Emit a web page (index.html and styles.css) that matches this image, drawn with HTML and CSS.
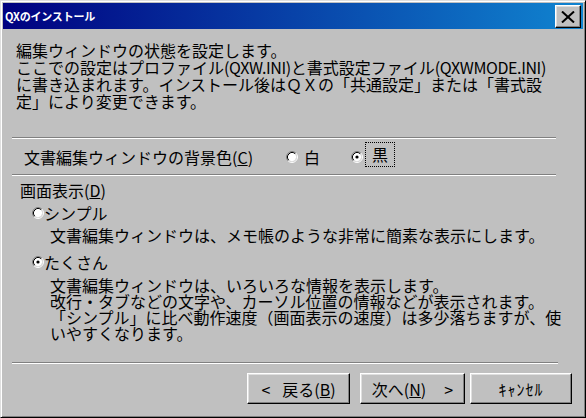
FILE: index.html
```html
<!DOCTYPE html>
<html lang="ja">
<head>
<meta charset="utf-8">
<title>QXのインストール</title>
<link rel="stylesheet" href="styles.css">
</head>
<body>
<div class="window">
  <div class="titlebar">
    <span class="title">QXのインストール</span>
    <button class="close" type="button" aria-label="閉じる">
      <svg width="14" height="12" viewBox="0 0 14 12"><path d="M1 0.5 L13 11.5 M13 0.5 L1 11.5" stroke="#000" stroke-width="2" fill="none"/></svg>
    </button>
  </div>
  <div class="content">
    <p class="intro">編集ウィンドウの状態を設定します。<br>ここでの設定はプロファイル<span class="latin">(QXW.INI)</span>と書式設定ファイル<span class="latin">(QXWMODE.INI)</span><br>に書き込まれます。インストール後はＱＸの「共通設定」または「書式設<br>定」により変更できます。</p>
    <hr class="sep">
    <div class="bg-row">
      <span class="bg-label">文書編集ウィンドウの背景色(<u>C</u>)</span>
      <span class="radio-item first">
        <svg class="radio" width="12" height="12" viewBox="0 0 12 12"><circle cx="6" cy="6" r="4.2" fill="#fff"/><path d="M2.11 9.89 A5.5 5.5 0 0 1 9.89 2.11" stroke="#808080" fill="none"/><path d="M9.89 2.11 A5.5 5.5 0 0 1 2.11 9.89" stroke="#fff" fill="none"/><path d="M2.82 9.18 A4.5 4.5 0 0 1 9.18 2.82" stroke="#000" fill="none"/><path d="M9.18 2.82 A4.5 4.5 0 0 1 2.82 9.18" stroke="#dfdfdf" fill="none"/></svg>
        <span>白</span>
      </span>
      <span class="radio-item second">
        <svg class="radio" width="12" height="12" viewBox="0 0 12 12"><circle cx="6" cy="6" r="4.2" fill="#fff"/><path d="M2.11 9.89 A5.5 5.5 0 0 1 9.89 2.11" stroke="#808080" fill="none"/><path d="M9.89 2.11 A5.5 5.5 0 0 1 2.11 9.89" stroke="#fff" fill="none"/><path d="M2.82 9.18 A4.5 4.5 0 0 1 9.18 2.82" stroke="#000" fill="none"/><path d="M9.18 2.82 A4.5 4.5 0 0 1 2.82 9.18" stroke="#dfdfdf" fill="none"/><circle cx="6" cy="6" r="1.6" fill="#000"/></svg>
        <span class="focus">黒</span>
      </span>
    </div>
    <hr class="sep flush">
    <div class="group-label">画面表示(<u>D</u>)</div>
    <div class="option opt-simple">
      <svg class="radio" width="12" height="12" viewBox="0 0 12 12"><circle cx="6" cy="6" r="4.2" fill="#fff"/><path d="M2.11 9.89 A5.5 5.5 0 0 1 9.89 2.11" stroke="#808080" fill="none"/><path d="M9.89 2.11 A5.5 5.5 0 0 1 2.11 9.89" stroke="#fff" fill="none"/><path d="M2.82 9.18 A4.5 4.5 0 0 1 9.18 2.82" stroke="#000" fill="none"/><path d="M9.18 2.82 A4.5 4.5 0 0 1 2.82 9.18" stroke="#dfdfdf" fill="none"/></svg>
      <span>シンプル</span>
    </div>
    <p class="desc desc-simple">文書編集ウィンドウは、メモ帳のような非常に簡素な表示にします。</p>
    <div class="option opt-many">
      <svg class="radio" width="12" height="12" viewBox="0 0 12 12"><circle cx="6" cy="6" r="4.2" fill="#fff"/><path d="M2.11 9.89 A5.5 5.5 0 0 1 9.89 2.11" stroke="#808080" fill="none"/><path d="M9.89 2.11 A5.5 5.5 0 0 1 2.11 9.89" stroke="#fff" fill="none"/><path d="M2.82 9.18 A4.5 4.5 0 0 1 9.18 2.82" stroke="#000" fill="none"/><path d="M9.18 2.82 A4.5 4.5 0 0 1 2.82 9.18" stroke="#dfdfdf" fill="none"/><circle cx="6" cy="6" r="1.6" fill="#000"/></svg>
      <span>たくさん</span>
    </div>
    <p class="desc desc-many">文書編集ウィンドウは、いろいろな情報を表示します。<br>改行・タブなどの文字や、カーソル位置の情報などが表示されます。<br>「シンプル」に比べ動作速度（画面表示の速度）は多少落ちますが、使<br>いやすくなります。</p>
    <hr class="sep bottom">
    <div class="buttons">
      <button class="btn btn-back" type="button"><span class="arrow">&lt;</span>戻る(<u>B</u>)</button>
      <button class="btn btn-next" type="button">次へ(<u>N</u>)<span class="arrow next">&gt;</span></button>
      <button class="btn btn-cancel" type="button"><span class="hw">ｷｬﾝｾﾙ</span></button>
    </div>
  </div>
</div>
</body>
</html>
```

FILE: styles.css
```css
* { box-sizing: border-box; }
html, body { margin: 0; padding: 0; background: #c0c0c0; }

.window {
  width: 586px;
  height: 418px;
  border: 1px solid;
  border-color: #dfdfdf #000 #000 #dfdfdf;
  box-shadow: inset 1px 1px #fff, inset -1px -1px #808080;
  padding: 2px;
  background: #c0c0c0;
  display: flex;
  flex-direction: column;
  font-family: "Noto Sans CJK JP", "Liberation Sans", sans-serif;
  color: #000;
  overflow: hidden;
}

.titlebar {
  height: 26px;
  flex: none;
  display: flex;
  align-items: center;
  justify-content: space-between;
  padding: 0 2px 0 2px;
  background: linear-gradient(to right, #000080, #1084d0);
}
.title {
  color: #fff;
  font-weight: bold;
  font-size: 11px;
  line-height: 13px;
  white-space: nowrap;
  letter-spacing: -0.2px;
}
.close {
  width: 26px;
  height: 23px;
  margin-top: 1px;
  padding: 0;
  display: flex;
  align-items: center;
  justify-content: center;
  background: #c0c0c0;
  border: 1px solid;
  border-color: #fff #000 #000 #fff;
  box-shadow: inset -1px -1px #808080, inset 1px 1px #dfdfdf;
}

.content {
  padding: 13px 0 0 9px;
  font-size: 16px;
  line-height: 16px;
}
p { margin: 0; }
u { text-decoration-thickness: 1px; text-underline-offset: 1px; }

.intro {
  margin-left: 4px;
  line-height: 17px;
  white-space: nowrap;
}
.latin { letter-spacing: -0.4px; }

.sep {
  margin: 27px 0 0 0;
  width: 544px;
  height: 0;
  border: 0;
  border-top: 1px solid #808080;
  border-bottom: 1px solid #fff;
}
.sep.flush { margin-top: 0; }
.sep.bottom { margin-top: 21px; width: 546px; }

.bg-row {
  height: 35px;
  display: flex;
  align-items: center;
  padding-left: 12px;
  white-space: nowrap;
}
.bg-label { width: 262px; }
.radio-item { display: flex; align-items: center; }
.radio-item.first { width: 65px; gap: 6px; }
.radio-item.second { gap: 2px; }
.radio { flex: none; display: block; }
.focus {
  border: 1px dotted #000;
  padding: 3px 6px 4px 6px;
  margin-bottom: 4px;
}

.group-label {
  margin-top: 6px;
  padding-left: 8px;
}

.option {
  display: flex;
  align-items: center;
  padding-left: 20px;
}
.opt-simple { margin-top: 7px; }
.opt-many { margin-top: 11px; }

.desc {
  padding-left: 38px;
  white-space: nowrap;
}
.desc-simple { margin-top: 6px; }
.desc-many { margin-top: 7px; }

.buttons {
  margin-top: 9px;
  margin-left: 235px;
  display: flex;
}
.btn {
  height: 31px;
  padding: 0;
  display: flex;
  align-items: center;
  justify-content: center;
  font-family: "Noto Sans CJK JP", "Liberation Sans", sans-serif;
  font-size: 16px;
  line-height: 16px;
  color: #000;
  background: #c0c0c0;
  border: 1px solid;
  border-color: #fff #000 #000 #fff;
  box-shadow: inset -1px -1px #808080, inset 1px 1px #dfdfdf;
  white-space: nowrap;
}
.btn-back { width: 103px; }
.btn-next { width: 105px; margin-left: 10px; }
.btn-cancel { width: 102px; margin-left: 5px; }
.hw { letter-spacing: 1px; }
.arrow { margin-right: 12px; }
.arrow.next { margin-right: 0; margin-left: 18px; }
```
